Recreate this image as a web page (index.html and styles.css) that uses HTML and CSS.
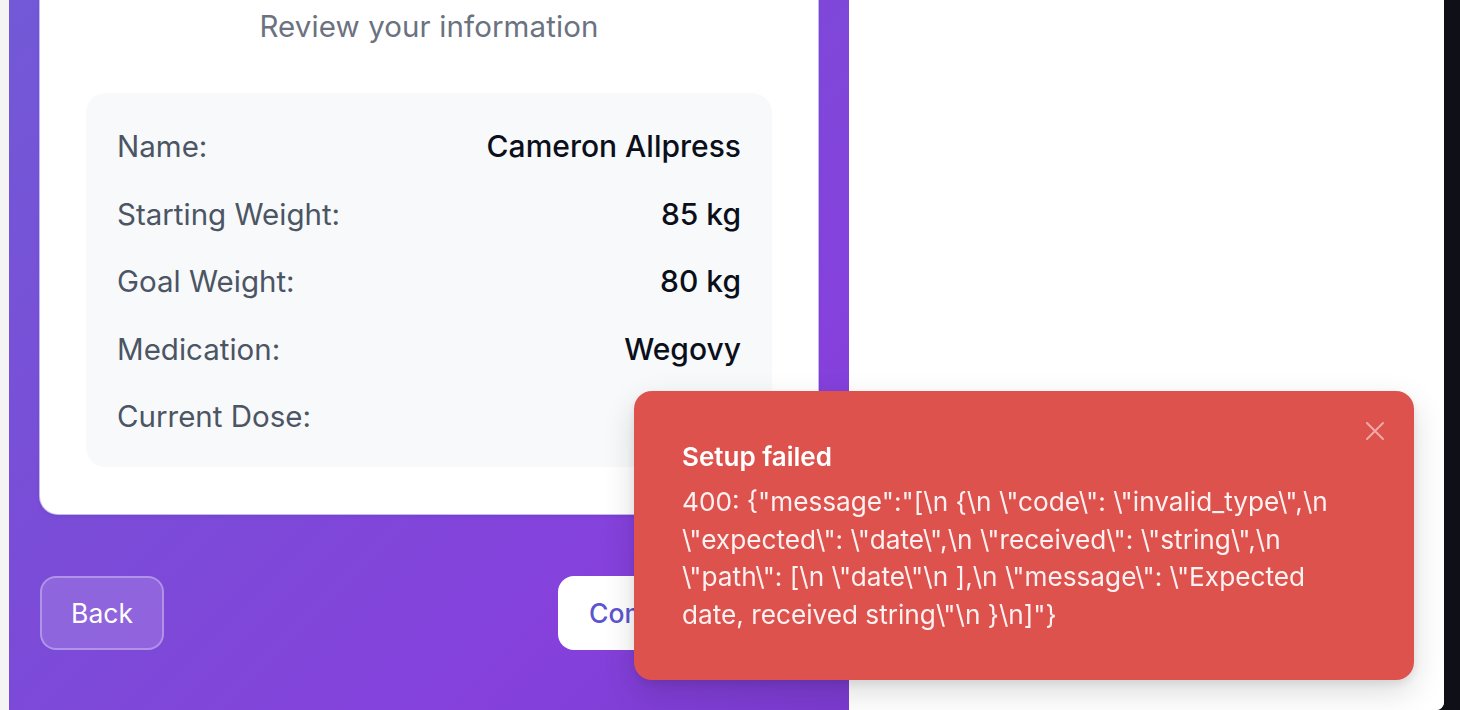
FILE: index.html
```html
<!DOCTYPE html>
<html lang="en">
<head>
<meta charset="utf-8">
<title>Review your information</title>
<link rel="stylesheet" href="styles.css">
</head>
<body>
<div class="window">
  <div class="gutter"></div>
  <section class="panel">
    <div class="card">
      <h2 class="card-title">Review your information</h2>
      <dl class="summary">
        <div class="row"><dt>Name:</dt><dd>Cameron Allpress</dd></div>
        <div class="row"><dt>Starting Weight:</dt><dd>85 kg</dd></div>
        <div class="row"><dt>Goal Weight:</dt><dd>80 kg</dd></div>
        <div class="row"><dt>Medication:</dt><dd>Wegovy</dd></div>
        <div class="row"><dt>Current Dose:</dt><dd>0.5 mg</dd></div>
      </dl>
    </div>
    <div class="actions">
      <button class="btn btn-back">Back</button>
      <button class="btn btn-primary">Complete Setup</button>
    </div>
  </section>
  <section class="side"></section>
</div>

<div class="toast" role="alert">
  <button class="toast-close" aria-label="Close">
    <svg width="24" height="24" viewBox="0 0 24 24" fill="none" stroke="currentColor" stroke-width="2" stroke-linecap="round"><path d="M4 4L20 20M20 4L4 20"/></svg>
  </button>
  <div class="toast-title">Setup failed</div>
  <div class="toast-body">400: {"message":"[\n {\n \"code\": \"invalid_type\",\n \"expected\": \"date\",\n \"received\": \"string\",\n \"path\": [\n \"date\"\n ],\n \"message\": \"Expected date, received string\"\n }\n]"}</div>
</div>
</body>
</html>
```

FILE: styles.css
```css
* { box-sizing: border-box; }

html, body {
  margin: 0;
  height: 100%;
}

body {
  background: #0f1017;
  font-family: "Inter", "Noto Sans", sans-serif;
  overflow: hidden;
}

.window {
  display: flex;
  width: 1444px;
  height: 710px;
  background: #ffffff;
  border-bottom-right-radius: 8px;
  overflow: hidden;
}

.gutter {
  width: 9px;
  flex: none;
  background: #f4f4f5;
}

.panel {
  width: 840px;
  flex: none;
  background: linear-gradient(135deg, #7259d6 0%, #7c4ad8 45%, #8641dd 75%, #7b3bcf 100%);
  padding: 0 31px;
  display: flex;
  flex-direction: column;
}

.side {
  flex: 1;
  background: #ffffff;
}

.card {
  margin-top: -20px;
  background: #ffffff;
  border-radius: 18px;
  padding: 25px 46px 47px;
  box-shadow: 0 0 0 1px rgba(205, 200, 240, 0.9), 0 2px 4px rgba(40, 20, 90, 0.12);
}

.card-title {
  margin: 0 0 46px;
  text-align: center;
  font-size: 29.5px;
  line-height: 42px;
  font-weight: 400;
  color: #6b7280;
  letter-spacing: 0.1px;
}

.summary {
  margin: 0;
  background: #f8f9fb;
  border-radius: 20px;
  padding: 34px 31px 32px;
  display: flex;
  flex-direction: column;
  gap: 29.5px;
}

.row {
  display: flex;
  justify-content: space-between;
  align-items: center;
  font-size: 29.5px;
  line-height: 38px;
}

.row dt {
  color: #4b5563;
}

.row dd {
  margin: 0;
  color: #0b0f1a;
  font-weight: 500;
  font-size: 30px;
}

.actions {
  margin-top: 62px;
  display: flex;
  justify-content: space-between;
}

.btn {
  font-family: inherit;
  font-size: 26.5px;
  line-height: 38px;
  height: 74px;
  border-radius: 16px;
  padding: 0 28px;
  cursor: pointer;
  white-space: nowrap;
}

.btn-back {
  width: 124px;
  background: rgba(255, 255, 255, 0.15);
  border: 2px solid rgba(255, 255, 255, 0.3);
  color: #ffffff;
}

.btn-primary {
  width: 260px;
  background: #ffffff;
  border: none;
  color: #5b55d0;
  font-weight: 500;
  padding: 0 20px 0 31px;
  text-align: left;
}

.toast {
  position: fixed;
  left: 634px;
  top: 391px;
  width: 780px;
  height: 289px;
  background: #de524d;
  border-radius: 18px;
  padding: 47px 48px 48px;
  color: #ffffff;
  box-shadow: 0 12px 32px rgba(0, 0, 0, 0.14), 0 4px 10px rgba(0, 0, 0, 0.08);
}

.toast-close {
  position: absolute;
  top: 28px;
  right: 27px;
  width: 24px;
  height: 24px;
  padding: 0;
  border: none;
  background: none;
  color: rgba(255, 255, 255, 0.5);
}

.toast-close svg { display: block; }

.toast-title {
  font-size: 26px;
  line-height: 38px;
  font-weight: 600;
  margin-bottom: 7px;
}

.toast-body {
  font-size: 26.2px;
  line-height: 37.5px;
  color: rgba(255, 255, 255, 0.92);
  padding-right: 26px;
}
```
